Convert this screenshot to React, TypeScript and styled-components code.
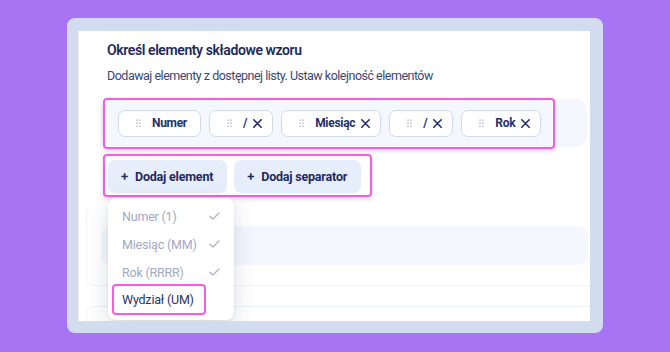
import styled, { createGlobalStyle } from 'styled-components';

const GlobalStyle = createGlobalStyle`
  html, body {
    margin: 0;
    padding: 0;
  }
  body {
    background: #a774f4;
    font-family: Roboto, "Noto Sans", sans-serif;
  }
`;

const Page = styled.div`
  width: 670px;
  height: 352px;
  box-sizing: border-box;
  padding: 18px 67px 19px;
`;

const Frame = styled.div`
  height: 100%;
  box-sizing: border-box;
  background: #d3dcee;
  border-radius: 8px;
  padding: 13px 13px 12px 11px;
`;

const Panel = styled.div`
  position: relative;
  height: 100%;
  box-sizing: border-box;
  background: #fff;
  overflow: hidden;
  padding: 9px 3px 0 28px;
  border-left: 1px solid #eef1f7;
`;

const Title = styled.h2`
  margin: 0;
  font-size: 14px;
  line-height: 20px;
  font-weight: 600;
  letter-spacing: -0.4px;
  color: #1e295c;
`;

const Subtitle = styled.p`
  margin: 7px 0 0;
  font-size: 12.5px;
  line-height: 18px;
  letter-spacing: -0.5px;
  color: #3b4672;
`;

const ChipRow = styled.div`
  display: flex;
  align-items: center;
  height: 48px;
  margin: 14px 0 0 -6px;
  padding-left: 2px;
  background: #f4f7fd;
  border-radius: 10px;
`;

const Highlight = styled.div`
  display: flex;
  align-items: center;
  border: 2px solid #f25de3;
  border-radius: 4px;
  box-shadow: 0 2px 4px rgba(40, 40, 60, 0.18);
`;

const ChipGroup = styled(Highlight)`
  gap: 8px;
  padding: 10px 12px 10px 13px;
`;

const Chip = styled.div<{ $removable?: boolean }>`
  display: flex;
  align-items: center;
  height: 27px;
  box-sizing: border-box;
  padding: 0 ${p => (p.$removable ? '10px' : '13px')} 0 17px;
  background: #fff;
  border: 1px solid #cfdaee;
  border-radius: 7px;
  font-size: 12px;
  font-weight: 700;
  letter-spacing: -0.3px;
  color: #24306a;
`;

const ChipLabel = styled.span`
  margin-left: 11px;
`;

const RemoveBtn = styled.span`
  display: flex;
  margin-left: 6px;
  color: #24306a;
`;

const ButtonGroup = styled(Highlight)`
  display: inline-flex;
  gap: 7px;
  margin: 7px 0 0 -4px;
  padding: 4px 9px 2px 3px;
`;

const AddButton = styled.button`
  display: flex;
  align-items: center;
  gap: 7px;
  height: 33px;
  padding: 0 14px 0 13px;
  border: none;
  border-radius: 7px;
  background: #e7eefb;
  font-family: inherit;
  font-size: 12.5px;
  font-weight: 700;
  letter-spacing: -0.2px;
  color: #1f2a5e;
`;

const Plus = styled.span`
  font-size: 13px;
  font-weight: 600;
`;

const GhostCard = styled.div`
  margin: 8px -10px 0 -21px;
  height: 81px;
  box-sizing: border-box;
  border: 1px solid #f0f3fa;
  border-top-color: transparent;
  border-radius: 8px;
  padding: 20px 0 0 14px;
`;

const GhostRow = styled.div`
  width: 487px;
  height: 39px;
  background: #f4f7fd;
  border-radius: 10px;
`;

const GhostCardNext = styled.div`
  margin: 20px -10px 0 -21px;
  height: 40px;
  border: 1px solid #eef2f9;
  border-radius: 8px;
`;

const Dropdown = styled.div`
  position: absolute;
  left: 29px;
  top: 167px;
  width: 126px;
  box-sizing: border-box;
  padding: 4px 0 5px;
  background: #fff;
  border-radius: 8px;
  box-shadow: 0 6px 22px rgba(40, 50, 90, 0.16), 0 1px 3px rgba(40, 50, 90, 0.08);
`;

const Option = styled.div`
  display: flex;
  align-items: center;
  justify-content: space-between;
  height: 28px;
  padding: 0 14px;
  font-size: 12.5px;
  letter-spacing: -0.2px;
  color: #a2a8c3;
`;

const ActiveOption = styled.div`
  display: inline-flex;
  align-items: center;
  height: 31px;
  box-sizing: border-box;
  margin: -2px 0 0 4px;
  padding: 0 10px 0 8px;
  border: 2px solid #f25de3;
  border-radius: 4px;
  font-size: 12.5px;
  letter-spacing: -0.2px;
  color: #28336a;
`;

function Grip() {
  const dots = [1, 4].flatMap(x => [1.2, 4.2, 7.2].map(y => ({ x, y })));
  return (
    <svg width="5" height="9" viewBox="0 0 5 9">
      {dots.map((d, i) => (
        <circle key={i} cx={d.x} cy={d.y} r="1" fill="#c9cdd8" />
      ))}
    </svg>
  );
}

function XIcon() {
  return (
    <svg width="9" height="9" viewBox="0 0 9 9">
      <path d="M0.8 0.8L8.2 8.2M8.2 0.8L0.8 8.2" stroke="currentColor" strokeWidth="1.6" strokeLinecap="round" />
    </svg>
  );
}

function Check() {
  return (
    <svg width="11" height="8" viewBox="0 0 11 8">
      <path d="M1 4.2L3.9 7L10 1" fill="none" stroke="#a9b0c8" strokeWidth="1.2" strokeLinecap="round" strokeLinejoin="round" />
    </svg>
  );
}

const elements = [
  { label: 'Numer', removable: false },
  { label: '/', removable: true },
  { label: 'Miesiąc', removable: true },
  { label: '/', removable: true },
  { label: 'Rok', removable: true },
];

const options = ['Numer (1)', 'Miesiąc (MM)', 'Rok (RRRR)'];

export default function App() {
  return (
    <>
      <GlobalStyle />
      <Page>
        <Frame>
          <Panel>
            <Title>Określ elementy składowe wzoru</Title>
            <Subtitle>Dodawaj elementy z dostępnej listy. Ustaw kolejność elementów</Subtitle>
            <ChipRow>
              <ChipGroup>
                {elements.map((el, i) => (
                  <Chip key={i} $removable={el.removable}>
                    <Grip />
                    <ChipLabel>{el.label}</ChipLabel>
                    {el.removable && (
                      <RemoveBtn>
                        <XIcon />
                      </RemoveBtn>
                    )}
                  </Chip>
                ))}
              </ChipGroup>
            </ChipRow>
            <ButtonGroup>
              <AddButton>
                <Plus>+</Plus>
                Dodaj element
              </AddButton>
              <AddButton>
                <Plus>+</Plus>
                Dodaj separator
              </AddButton>
            </ButtonGroup>
            <GhostCard>
              <GhostRow />
            </GhostCard>
            <GhostCardNext />
            <Dropdown>
              {options.map(o => (
                <Option key={o}>
                  {o}
                  <Check />
                </Option>
              ))}
              <ActiveOption>Wydział (UM)</ActiveOption>
            </Dropdown>
          </Panel>
        </Frame>
      </Page>
    </>
  );
}
